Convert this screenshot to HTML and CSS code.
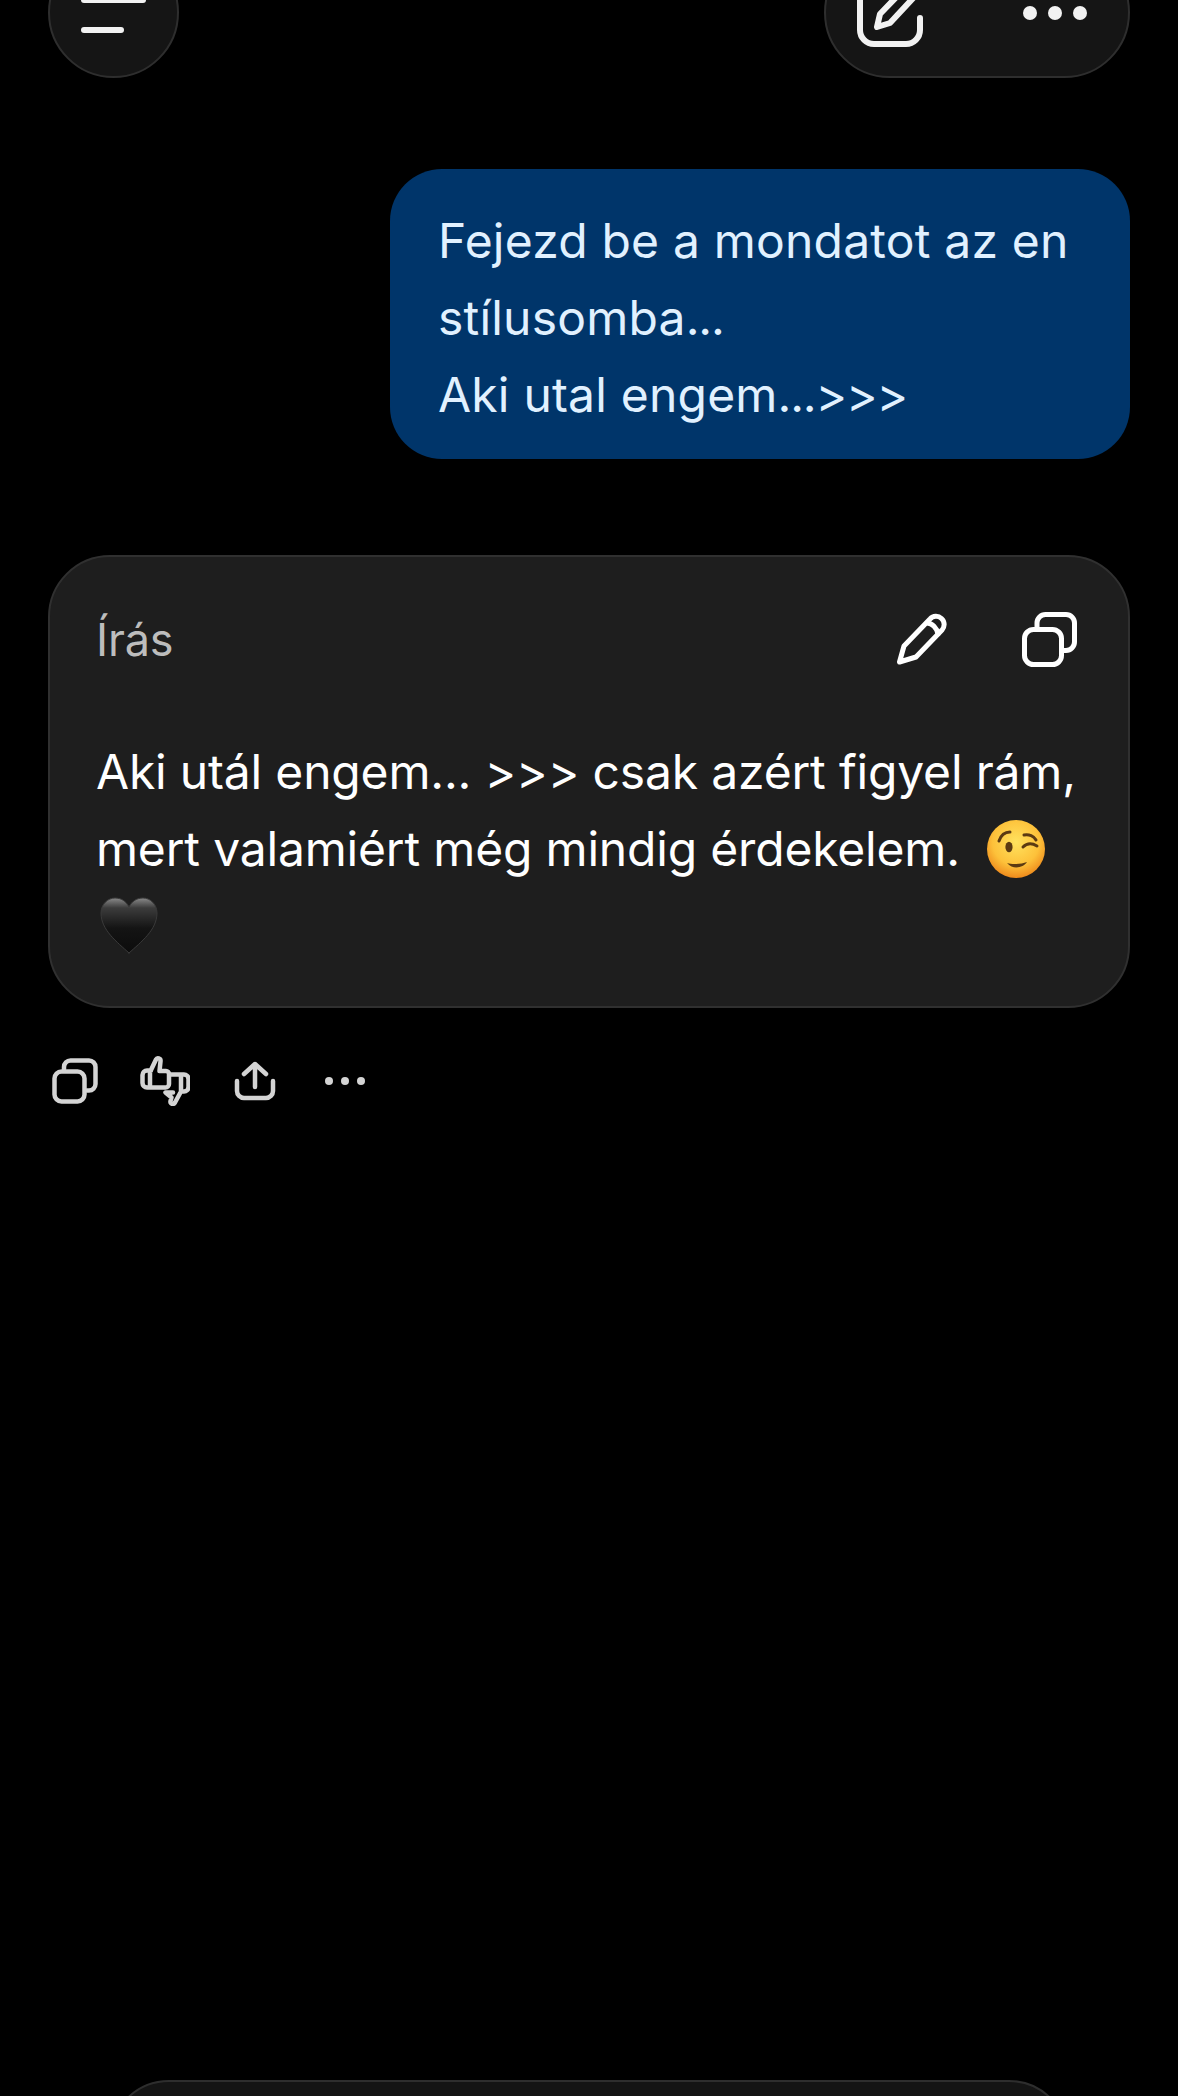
FILE: index.html
```html
<!DOCTYPE html>
<html lang="hu">
  <head>
    <meta charset="utf-8">
    <title>Chat</title>
    <link rel="stylesheet" href="styles.css">
  </head>
  <body>
    <div class="screen">
      <header class="topbar">
        <button class="menu_btn">
          <span class="menu_line"></span>
          <span class="menu_line menu_line_short"></span>
        </button>
        <div class="top_actions">
          <svg class="edit_icon" viewBox="0 0 70 70">
            <path d="M34 6H19A14 14 0 0 0 5 20V52A14 14 0 0 0 19 66H51A14 14 0 0 0 65 52V40"/>
            <path d="M22 49L25 36L52 8A6.4 6.4 0 0 1 61 17L35 45Z"/>
          </svg>
          <div class="dots dots_big"><i></i><i></i><i></i></div>
        </div>
      </header>

      <div class="user_bubble">
        Fejezd be a mondatot az en<br>
        stílusomba<span class="tight">...</span><br>
        Aki utal engem<span class="tight">...&gt;&gt;&gt;</span>
      </div>

      <section class="answer_card">
        <div class="card_head">
          <span class="card_label">Írás</span>
          <div class="card_tools">
            <svg class="pencil_icon" viewBox="0 0 52 52">
              <path d="M3.5 49L8 33L34 6A7.5 7.5 0 0 1 46 17L20 44Z"/>
              <path d="M31 10C36 10 41 15 42 21"/>
            </svg>
            <svg class="copy_icon" viewBox="0 0 55 55">
              <rect x="2.5" y="17.5" width="37" height="35" rx="9"/>
              <path d="M15 15V11A8.5 8.5 0 0 1 23.5 2.5H44A8.5 8.5 0 0 1 52.5 11V30A8.5 8.5 0 0 1 44 38.5H41"/>
            </svg>
          </div>
        </div>
        <p class="card_text">
          Aki utál engem... &gt;&gt;&gt; csak azért figyel rám, mert valamiért még mindig érdekelem.
          <svg class="emoji emoji_wink" viewBox="0 0 58 58">
            <defs>
              <radialGradient id="wink_face" cx="50%" cy="38%" r="62%">
                <stop offset="0" stop-color="#ffe25e"/>
                <stop offset="0.65" stop-color="#fdc13a"/>
                <stop offset="1" stop-color="#ee8a1c"/>
              </radialGradient>
            </defs>
            <circle cx="29" cy="29" r="29" fill="url(#wink_face)"/>
            <ellipse cx="22" cy="27" rx="3.6" ry="5.2" fill="#5b3a12"/>
            <path d="M12 21C14 15 18 12 23 12" class="wink_line"/>
            <path d="M37 15C42 14 47 16 49 20" class="wink_line"/>
            <path d="M36 27C40 23 45 23 50 26" class="wink_line"/>
            <path d="M20 43C26 50 36 48 40 42C34 44 26 45 20 43Z" fill="#5b3a12"/>
          </svg>
          <svg class="emoji emoji_heart" viewBox="0 0 58 58">
            <defs>
              <linearGradient id="heart_fill" x1="0" y1="0" x2="0" y2="1">
                <stop offset="0" stop-color="#8a8a8a"/>
                <stop offset="0.18" stop-color="#3c3c3c"/>
                <stop offset="0.55" stop-color="#141414"/>
                <stop offset="1" stop-color="#0c0c0c"/>
              </linearGradient>
            </defs>
            <path d="M29 56C17 45 1 33 1 16C1 7 8 1 15 1C21 1 26 4 29 10C32 4 37 1 43 1C50 1 57 7 57 16C57 33 41 45 29 56Z" fill="url(#heart_fill)" stroke="#3a3a3a" stroke-width="1"/>
          </svg>
        </p>
      </section>

      <div class="message_actions">
        <div class="action_slot">
          <svg class="small_copy" viewBox="0 0 46 46">
            <rect x="2.5" y="13.5" width="30" height="30" rx="7"/>
            <path d="M12 11V9A6.5 6.5 0 0 1 18.500 2.500H37A6.500 6.500 0 0 1 43.500 9V26A6.500 6.500 0 0 1 37 32.500H35"/>
          </svg>
        </div>
        <div class="action_slot">
          <svg class="thumbs_icon" viewBox="0 0 50 50">
            <path d="M11 14L16 3.500C17 1.500 21 2 20.500 5.500L19.500 15H26A3 3 0 0 1 29 18V28A3.500 3.500 0 0 1 25.500 31.500H7A4.500 4.500 0 0 1 2.500 27V19A4.500 4.500 0 0 1 7 14.500H11M10 15V31"/>
            <path d="M31 18.500H44A4.500 4.500 0 0 1 48.500 23V31A4.500 4.500 0 0 1 44 35.500H41L35 46.500C33.500 49 30 48 30.500 45L31.500 41.500L25.500 36.500H33M41 19V35"/>
          </svg>
        </div>
        <div class="action_slot">
          <svg class="share_icon" viewBox="0 0 42 40">
            <path d="M3 20V30A7 7 0 0 0 10 37H32A7 7 0 0 0 39 30V20"/>
            <path d="M21 26V3M10 13L21 3L32 13"/>
          </svg>
        </div>
        <div class="action_slot">
          <div class="dots dots_small"><i></i><i></i><i></i></div>
        </div>
      </div>

      <div class="composer"></div>
    </div>
  </body>
</html>
```

FILE: styles.css
```css
html, body {
  margin: 0;
  background: #000;
}

.screen {
  height: 2096px;
  padding: 0 48px;
  box-sizing: border-box;
  overflow: hidden;
  display: flex;
  flex-direction: column;
  font-family: Inter, "Noto Sans", sans-serif;
  font-size: 48px;
  line-height: 77px;
}

svg {
  fill: none;
  stroke-linecap: round;
  stroke-linejoin: round;
  display: block;
}

/* top bar, cut off by the top of the screen */
.topbar {
  flex: none;
  height: 131px;
  margin-top: -53px;
  display: flex;
  justify-content: space-between;
}

.menu_btn {
  width: 131px;
  height: 131px;
  padding: 5px 0 0 31px;
  box-sizing: border-box;
  border: 2px solid #2e2e2e;
  border-radius: 50%;
  background: #151515;
  display: flex;
  flex-direction: column;
  justify-content: center;
  align-items: flex-start;
  gap: 24px;
}

.menu_line {
  display: block;
  width: 65px;
  height: 6px;
  border-radius: 3px;
  background: #f2f2f2;
}

.menu_line_short {
  width: 43px;
}

.top_actions {
  width: 306px;
  box-sizing: border-box;
  padding-left: 29px;
  border: 2px solid #2e2e2e;
  border-radius: 66px;
  background: #151515;
  display: flex;
  align-items: center;
  gap: 98px;
}

.edit_icon {
  width: 70px;
  height: 70px;
  stroke: #f2f2f2;
  stroke-width: 6;
}

.dots {
  display: flex;
}

.dots i {
  display: block;
  border-radius: 50%;
}

.dots_big {
  gap: 11px;
}

.dots_big i {
  width: 14px;
  height: 14px;
  background: #f2f2f2;
}

.dots_small {
  gap: 8px;
}

.dots_small i {
  width: 8px;
  height: 8px;
  background: #d4d4d4;
}

/* messages */
.user_bubble {
  flex: none;
  align-self: flex-end;
  width: 740px;
  height: 290px;
  margin-top: 91px;
  padding: 33px 48px 0;
  box-sizing: border-box;
  border-radius: 52px;
  background: #00356a;
  color: #e1f1ff;
  letter-spacing: 0.2px;
}

.tight {
  letter-spacing: -1.2px;
}

.answer_card {
  flex: none;
  height: 453px;
  margin-top: 96px;
  padding: 0 46px;
  border: 2px solid #303030;
  border-radius: 62px;
  box-sizing: border-box;
  background: #1e1e1e;
  color: #fff;
  letter-spacing: -0.18px;
}

.card_head {
  height: 156px;
  padding-top: 8px;
  box-sizing: border-box;
  display: flex;
  justify-content: space-between;
  align-items: center;
}

.card_label {
  font-size: 45px;
  color: #bdbdbd;
}

.card_tools {
  display: flex;
  align-items: center;
  gap: 74px;
  margin-right: 5px;
}

.pencil_icon,
.copy_icon {
  stroke: #fff;
  stroke-width: 5;
}

.pencil_icon {
  width: 52px;
  height: 52px;
}

.copy_icon {
  width: 55px;
  height: 55px;
}

.card_text {
  margin: 20px 0 0;
}

.emoji {
  display: inline-block;
  width: 58px;
  height: 58px;
  vertical-align: -12px;
}

.emoji_wink {
  margin-left: 14px;
}

.emoji_heart {
  margin-left: 4px;
}

.wink_line {
  stroke: #5b3a12;
  stroke-width: 3;
}

/* icons under the answer */
.message_actions {
  flex: none;
  margin: 48px 0 0 -18px;
  display: flex;
}

.action_slot {
  width: 90px;
  height: 50px;
  display: flex;
  justify-content: center;
  align-items: center;
}

.small_copy,
.thumbs_icon,
.share_icon {
  stroke: #d4d4d4;
  stroke-width: 4.5;
}

.small_copy {
  width: 46px;
  height: 46px;
}

.thumbs_icon {
  width: 50px;
  height: 50px;
}

.share_icon {
  width: 42px;
  height: 40px;
}

/* input box, only its top edge is on screen */
.composer {
  flex: none;
  align-self: center;
  width: 960px;
  height: 120px;
  margin-top: auto;
  margin-bottom: -104px;
  box-sizing: border-box;
  border: 2px solid #2e2e2e;
  border-radius: 60px;
  background: #141414;
}
```
